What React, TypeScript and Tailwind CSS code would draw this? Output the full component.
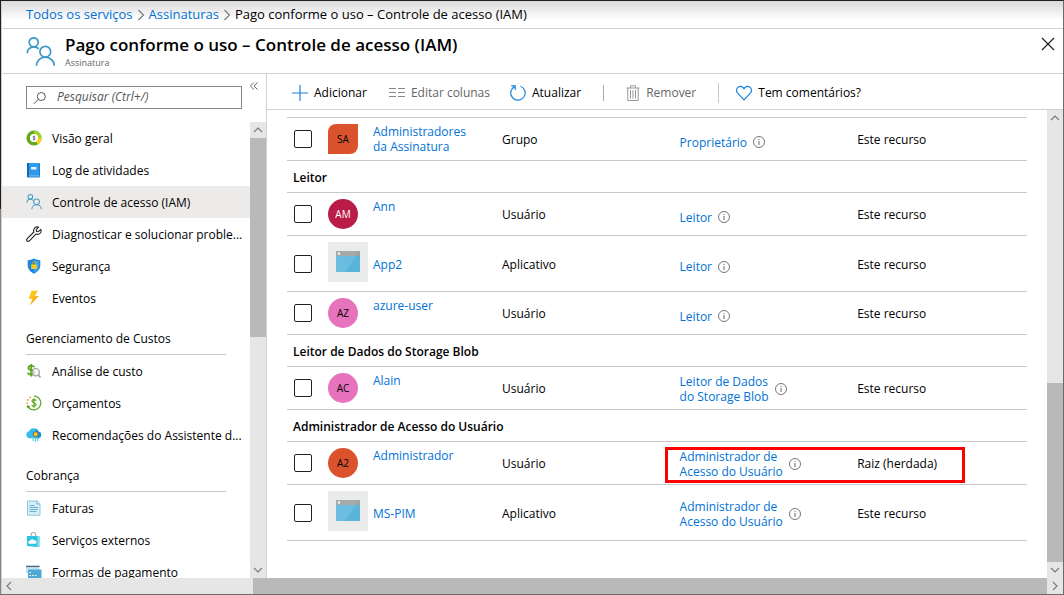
import type { ReactNode } from "react";

type IconProps = { className?: string };

function PeopleIcon({ className }: IconProps) {
  return (
    <svg viewBox="0 0 29 30" fill="none" stroke="#3999c6" strokeWidth="1.7" className={className} aria-hidden="true">
      <circle cx="7.7" cy="5.3" r="4.5" />
      <path d="M1.2 16.2c0-3.8 2.9-6.4 6.5-6.4 2.1 0 3.8.8 5 2.1" />
      <circle cx="19.3" cy="14.7" r="5.4" />
      <path d="M10.4 28.8c0-5 4-8.7 8.9-8.7s8.9 3.7 8.9 8.7" />
    </svg>
  );
}

function SmallPeopleIcon() {
  return (
    <svg viewBox="0 0 29 30" fill="none" stroke="#4a9dc4" strokeWidth="2" className="size-4" aria-hidden="true">
      <circle cx="7.7" cy="5.3" r="4.3" />
      <path d="M1.2 16.2c0-3.8 2.9-6.4 6.5-6.4 2.1 0 3.8.8 5 2.1" />
      <circle cx="19.3" cy="14.7" r="5.4" />
      <path d="M10.4 28.8c0-5 4-8.7 8.9-8.7s8.9 3.7 8.9 8.7" />
    </svg>
  );
}

function OverviewIcon() {
  return (
    <svg viewBox="0 0 16 16" className="size-4" aria-hidden="true">
      <g fill="none" strokeWidth="3.6">
        <circle cx="8" cy="8" r="5.8" stroke="#5fa91d" />
        <path d="M8 2.200A5.800 5.800 0 0 1 13.800 8" stroke="#a3cf2e" />
        <path d="M13.800 8A5.800 5.800 0 0 1 10.900 13.020" stroke="#fcd116" />
      </g>
      <circle cx="8" cy="8" r="4" fill="#fff" />
      <path d="M9.200 6.900C8.800 6.200 7 6.200 7 7.200s2.200.6 2.200 1.600S7.200 9.900 6.800 9.200M8 5.600v4.800" fill="none" stroke="#444" strokeWidth=".6" />
    </svg>
  );
}

function LogIcon() {
  return (
    <svg viewBox="0 0 16 16" className="size-4" aria-hidden="true">
      <rect x="1" y="1" width="13" height="14.500" rx="1" fill="#1b7fd0" />
      <rect x="3" y="1" width="10" height="13" fill="#2f9bea" />
      <rect x="1" y="1" width="2" height="14" fill="#1469b4" />
      <path d="M3 14h10.500" stroke="#7fc3f5" />
      <rect x="5" y="5" width="5.500" height="2.500" fill="#e8f4fd" />
    </svg>
  );
}

function WrenchIcon() {
  return (
    <svg viewBox="0 0 16 16" className="size-4" fill="none" stroke="#222" strokeWidth="1.1" strokeLinejoin="round" aria-hidden="true">
      <path d="M14.800 3.400 12.300 5.700 10.500 5.300 10.200 3.600 12.600 1.100C10.600.5 8.600 1.300 7.900 3.100 7.500 4.200 7.600 5.100 7.900 6L1.200 12.600C.5 13.300.5 14.200 1.100 14.900 1.700 15.500 2.700 15.500 3.400 14.800L9.900 8.100C11.500 8.700 13.300 8.300 14.400 7 15.200 6 15.300 4.600 14.800 3.400Z" />
    </svg>
  );
}

function ShieldIcon() {
  return (
    <svg viewBox="0 0 16 16" className="size-4" aria-hidden="true">
      <path d="M8 .6c2 1.400 4.200 1.600 6.300 1.700v5.400c0 4.200-4 6.800-6.300 7.900-2.300-1.100-6.300-3.700-6.300-7.900V2.300C3.800 2.200 6 2 8 .6Z" fill="#1a86dd" />
      <path d="M8 1.800c1.700 1 3.500 1.300 5.200 1.400v4.500c0 3.500-3.200 5.700-5.200 6.700Z" fill="#3ea2ef" />
      <path d="M6.200 7V5.500a1.800 1.800 0 0 1 3.600 0V7" fill="none" stroke="#d8a60a" strokeWidth="1" />
      <rect x="5.200" y="6.600" width="5.600" height="4.400" rx=".5" fill="#fbc91b" />
    </svg>
  );
}

function BoltIcon() {
  return (
    <svg viewBox="0 0 16 16" className="size-4" aria-hidden="true">
      <path d="M5.500.7h6.300L8.900 5.900h3.800L4.200 15.300 6.300 8.800H2.700Z" fill="#fcc419" />
      <path d="M8.900 5.900h3.800L4.200 15.300l3-7.300Z" fill="#f8a51b" opacity=".6" />
    </svg>
  );
}

function CostIcon() {
  return (
    <svg viewBox="0 0 16 16" className="size-4" fill="none" aria-hidden="true">
      <path d="M8.200 4.300C7.600 2.300 2.400 2.200 2.400 4.900c0 2.800 5.700 1.700 5.700 4.600 0 2.700-5.600 2.700-6.300.3M5.200 1v12.500" stroke="#5aa51d" strokeWidth="1.800" />
      <circle cx="9.700" cy="9.200" r="3.700" stroke="#999" strokeWidth="1.200" fill="#f3f7ef" fillOpacity=".7" />
      <path d="m12.300 12 2.200 2.500" stroke="#999" strokeWidth="1.500" />
    </svg>
  );
}

function BudgetIcon() {
  return (
    <svg viewBox="0 0 16 16" className="size-4" fill="none" aria-hidden="true">
      <path d="M8 1.200a6.800 6.800 0 1 1-5.700 10.600" stroke="#5aa51d" strokeWidth="1.200" />
      <path d="M1.200 9A6.800 6.800 0 0 1 6.500 1.400" stroke="#f08c1b" strokeWidth="1.400" strokeDasharray="1.600 1.700" />
      <path d="M.6 10.300 4.300 11 1.400 13.600Z" fill="#5aa51d" />
      <path d="M10 5.700C9.400 4.300 6 4.300 6 6.200s4.100 1.300 4.100 3.400-3.800 2.100-4.300.5M8 3.300v9.400" stroke="#5aa51d" strokeWidth="1.200" />
    </svg>
  );
}

function AdvisorIcon() {
  return (
    <svg viewBox="0 0 16 16" className="size-4" aria-hidden="true">
      <path d="M3.800 11.200A3.500 3.500 0 0 1 3 4.300 5.200 5.200 0 0 1 12.500 4.600a3.400 3.400 0 0 1 .3 6.600Z" fill="#32bdec" />
      <path d="M10 1.700a5 5 0 0 1 2.500 2.900 3.400 3.400 0 0 1 .3 6.600H10Z" fill="#1490d6" />
      <path d="M7.200 10v4M9.500 10v5M11.800 10v4" stroke="#54d3d6" strokeWidth="1.200" />
      <circle cx="9.700" cy="7.200" r="2.500" fill="#fcc419" stroke="#4b5e63" strokeWidth=".8" />
    </svg>
  );
}

function InvoiceIcon() {
  return (
    <svg viewBox="0 0 16 16" className="size-4" aria-hidden="true">
      <path d="M1.500 1h9.800L14 3.700v11.500H1.500Z" fill="#d9edf7" stroke="#8cc7e2" />
      <path d="M11 1v3h3" fill="#fff" stroke="#59b4d9" />
      <path d="M3.500 5.500h5M3.500 7.500h8.500M3.500 9.500h8.500M3.500 11.500h7" stroke="#59a9d0" strokeWidth=".9" />
    </svg>
  );
}

function ServicesIcon() {
  return (
    <svg viewBox="0 0 16 16" className="size-4" aria-hidden="true">
      <path d="M5.200 5V2.600a2.300 2.300 0 0 1 4.600 0V5" fill="none" stroke="#999" />
      <path d="M1 4h10.500l2.500.7v9.600l-2.500.7L1 14Z" fill="#2cc4e6" />
      <path d="m11.500 4 2.500.7v9.600l-2.500.7Z" fill="#8fdff0" />
      <path d="M3.700 11.800a1.500 1.500 0 0 1 .2-3 2.300 2.300 0 0 1 4.200-.4 1.700 1.700 0 0 1 1.200 3.400Z" fill="#fff" />
    </svg>
  );
}

function CardsIcon() {
  return (
    <svg viewBox="0 0 16 16" className="size-4" aria-hidden="true">
      <rect x="0" y="1" width="13.500" height="8" fill="#bfe3f2" />
      <path d="M0 2.500h13.500" stroke="#666" strokeWidth="1.200" />
      <rect x="2" y="5.500" width="13.500" height="9.500" rx=".8" fill="#4fa9d4" />
      <path d="M3.500 8.500H5M3.500 11.500H5M6.200 11.500h1.500M9 11.500h1.500" stroke="#fff" strokeWidth="1" />
    </svg>
  );
}

function InfoIcon() {
  return (
    <svg viewBox="0 0 12 12" className="size-3 shrink-0" fill="none" stroke="#666" aria-hidden="true">
      <circle cx="6" cy="6" r="5.500" strokeWidth=".9" />
      <path d="M6 5v4M6 3v1" strokeWidth="1" />
    </svg>
  );
}

function Chevron({ d }: { d: string }) {
  return (
    <svg viewBox="0 0 16 16" className="size-4 shrink-0" fill="none" stroke="#777" strokeWidth="1.100" aria-hidden="true">
      <path d={d} />
    </svg>
  );
}
const UP = "M4 10l4-4 4 4";
const DOWN = "M4 6l4 4 4-4";
const LEFT = "M9 4L5 8l4 4";
const RIGHT = "M6 4l4 4-4 4";
const CRUMB = "M5.500 3l5 5-5 5";

function AppTile() {
  return (
    <span className="flex size-10 items-center justify-center bg-[#eaebeb]">
      <svg viewBox="0 0 24 21" className="h-[21px] w-6" aria-hidden="true">
        <rect width="24" height="21" rx=".8" fill="#59b4d9" />
        <path d="M0 5h20L9 21H0Z" fill="#6cbcdf" />
        <path d="M0 5V.8Q0 0 .8 0h22.400q.8 0 .8.800V5Z" fill="#a0a1a2" />
        <path d="M0 5V.8Q0 0 .8 0H22l-3 5Z" fill="#b0b1b2" opacity=".5" />
        <rect x="2" y="1.500" width="2" height="2" fill="#fff" />
      </svg>
    </span>
  );
}

type NavItem = { label: string; icon: ReactNode; active?: boolean };
const sections: { title?: string; items: NavItem[] }[] = [
  {
    items: [
      { label: "Visão geral", icon: <OverviewIcon /> },
      { label: "Log de atividades", icon: <LogIcon /> },
      { label: "Controle de acesso (IAM)", icon: <SmallPeopleIcon />, active: true },
      { label: "Diagnosticar e solucionar proble...", icon: <WrenchIcon /> },
      { label: "Segurança", icon: <ShieldIcon /> },
      { label: "Eventos", icon: <BoltIcon /> },
    ],
  },
  {
    title: "Gerenciamento de Custos",
    items: [
      { label: "Análise de custo", icon: <CostIcon /> },
      { label: "Orçamentos", icon: <BudgetIcon /> },
      { label: "Recomendações do Assistente d...", icon: <AdvisorIcon /> },
    ],
  },
  {
    title: "Cobrança",
    items: [
      { label: "Faturas", icon: <InvoiceIcon /> },
      { label: "Serviços externos", icon: <ServicesIcon /> },
      { label: "Formas de pagamento", icon: <CardsIcon /> },
    ],
  },
];

type Member = {
  name: string[];
  initials?: string;
  color?: string;
  type: "Grupo" | "Usuário" | "Aplicativo";
  role: string[];
  scope: string;
  highlighted?: boolean;
};
const groups: { title?: string; members: Member[] }[] = [
  {
    members: [
      { name: ["Administradores", "da Assinatura"], initials: "SA", color: "bg-[#da532c] text-black", type: "Grupo", role: ["Proprietário"], scope: "Este recurso" },
    ],
  },
  {
    title: "Leitor",
    members: [
      { name: ["Ann"], initials: "AM", color: "bg-[#b91d47] text-white", type: "Usuário", role: ["Leitor"], scope: "Este recurso" },
      { name: ["App2"], type: "Aplicativo", role: ["Leitor"], scope: "Este recurso" },
      { name: ["azure-user"], initials: "AZ", color: "bg-[#e773bd] text-black", type: "Usuário", role: ["Leitor"], scope: "Este recurso" },
    ],
  },
  {
    title: "Leitor de Dados do Storage Blob",
    members: [
      { name: ["Alain"], initials: "AC", color: "bg-[#e773bd] text-black", type: "Usuário", role: ["Leitor de Dados", "do Storage Blob"], scope: "Este recurso" },
    ],
  },
  {
    title: "Administrador de Acesso do Usuário",
    members: [
      { name: ["Administrador"], initials: "A2", color: "bg-[#da532c] text-black", type: "Usuário", role: ["Administrador de", "Acesso do Usuário"], scope: "Raiz (herdada)", highlighted: true },
      { name: ["MS-PIM"], type: "Aplicativo", role: ["Administrador de", "Acesso do Usuário"], scope: "Este recurso" },
    ],
  },
];

function Lines({ lines }: { lines: string[] }) {
  return (
    <>
      {lines.map((line) => (
        <span key={line} className="block whitespace-nowrap">
          {line}
        </span>
      ))}
    </>
  );
}

function MemberRow({ member }: { member: Member }) {
  const isApp = member.type === "Aplicativo";
  const cell = `${isApp ? "h-14" : "h-[43px]"} border-b border-[#c8c8c8] px-0`;
  return (
    <tr>
      <td className={`${cell} py-0`}>
        <input
          type="checkbox"
          aria-label={`Selecionar ${member.name.join(" ")}`}
          className="ml-[7px] block size-[18px] appearance-none rounded-xs border border-[#222] bg-white"
        />
      </td>
      <td className={`${cell} pt-0 ${isApp ? "pb-1" : "pb-0"}`}>
        {isApp ? (
          <AppTile />
        ) : (
          <span
            className={`flex size-[30px] items-center justify-center text-[10px] ${member.color} ${
              member.type === "Grupo" ? "rounded-tl-lg rounded-br-lg" : "rounded-full"
            }`}
          >
            {member.initials}
          </span>
        )}
      </td>
      <td className={`${cell} pb-0 ${isApp ? "pt-0.5" : "pt-1.5 align-top"} leading-[15px]`}>
        <a href="#membro" className="block text-[#0072d6]">
          <Lines lines={member.name} />
        </a>
      </td>
      <td className={`${cell} pt-0.5 pb-0`}>{member.type}</td>
      <td className={`${cell} relative py-0`}>
        <div className={`flex items-center gap-1.5 leading-[15px] ${member.role.length > 1 ? "pt-0.5" : "pt-1.5"}`}>
          <a href="#funcao" className="text-[#0072d6]">
            <Lines lines={member.role} />
          </a>
          <InfoIcon />
        </div>
        {member.highlighted && (
          <span className="pointer-events-none absolute top-[5px] -left-[15px] h-9 w-[300px] border-3 border-[#ff0000]" />
        )}
      </td>
      <td className={`${cell} pt-0.5 pb-0`}>{member.scope}</td>
    </tr>
  );
}

const toolButton = "flex items-center gap-1.5";

export default function App() {
  return (
    <div className="flex h-screen flex-col overflow-hidden border-t border-r border-b border-t-[#221e20] border-r-[#6b6b6b] border-b-[#6b6b6b] bg-white font-['Open_Sans','Noto_Sans',sans-serif] text-[12px] text-black">
      <div className="flex min-h-0 flex-1">
        <div className="w-px bg-linear-to-b from-[#221e20] from-35% to-[#858585] to-35%" />
        <div className="flex min-w-0 flex-1 flex-col border-l border-[#d0d0d0]">
          <nav aria-label="Trilha" className="flex h-7 items-center border-b border-[#d0d0d0] bg-linear-to-b from-[#dcdadc] to-white to-70% pl-6 text-[13px]">
            <a href="#servicos" className="text-[#0072d6]">Todos os serviços</a>
            <Chevron d={CRUMB} />
            <a href="#assinaturas" className="text-[#0072d6]">Assinaturas</a>
            <Chevron d={CRUMB} />
            <span>Pago conforme o uso – Controle de acesso (IAM)</span>
          </nav>

          <header className="flex h-[45px] items-start border-b border-[#d0d0d0] pt-2 pr-2 pl-6">
            <PeopleIcon className="h-[30px] w-[29px]" />
            <div className="ml-2.5 flex-1">
              <h1 className="text-[17px] leading-4 font-semibold">Pago conforme o uso – Controle de acesso (IAM)</h1>
              <p className="mt-0.5 text-[9px] leading-4 text-[#666]">Assinatura</p>
            </div>
            <button type="button" aria-label="Fechar">
              <svg viewBox="0 0 14 14" className="size-3.5" stroke="#222" strokeWidth="1.200" aria-hidden="true">
                <path d="M1 1l12 12M13 1L1 13" />
              </svg>
            </button>
          </header>

          <div className="flex min-h-0 flex-1">
            <aside className="flex w-[265px] shrink-0 flex-col border-r border-[#d0d0d0]">
              <div className="flex h-12 shrink-0 items-start pt-2 pl-6">
                <label className="mt-1 flex h-[23px] w-[216px] items-center border border-[#888] pl-1.5">
                  <svg viewBox="0 0 14 14" className="size-3.5 shrink-0" fill="none" stroke="#555" strokeWidth="1" aria-hidden="true">
                    <circle cx="8.300" cy="5.500" r="4" />
                    <path d="M5.400 8.300 .8 12.900" />
                  </svg>
                  <input
                    type="text"
                    aria-label="Pesquisar"
                    placeholder="Pesquisar (Ctrl+/)"
                    className="ml-2.5 w-full min-w-0 bg-transparent pb-0.5 italic outline-none placeholder:text-[#555]"
                  />
                </label>
                <button type="button" aria-label="Recolher menu" className="ml-2">
                  <svg viewBox="0 0 9 9" className="size-2" fill="none" stroke="#555" aria-hidden="true">
                    <path d="M4.500.5l-4 4 4 4M8.500.5l-4 4 4 4" />
                  </svg>
                </button>
              </div>
              <div className="flex min-h-0 flex-1">
                <nav aria-label="Menu do recurso" className="min-w-0 flex-1 overflow-hidden">
                  {sections.map((section) => (
                    <section key={section.title ?? "geral"}>
                      {section.title && (
                        <h2 className="mr-6 ml-6 flex h-[41px] items-center border-b border-[#c8c8c8] pt-2.5 font-medium">
                          {section.title}
                        </h2>
                      )}
                      {section.items.map((item) => (
                        <a
                          key={item.label}
                          href="#menu"
                          className={`flex h-8 items-center gap-2.5 pl-6 whitespace-nowrap ${item.active ? "bg-[#edebe9]" : ""}`}
                        >
                          {item.icon}
                          <span className="pt-0.5">{item.label}</span>
                        </a>
                      ))}
                    </section>
                  ))}
                </nav>
                <div className="flex w-4 shrink-0 flex-col bg-[#e6e6e6]" aria-hidden="true">
                  <Chevron d={UP} />
                  <div className="min-h-0 flex-1">
                    <div className="h-[47%] bg-[#b9b9b9]" />
                  </div>
                  <Chevron d={DOWN} />
                </div>
              </div>
            </aside>

            <main className="flex min-w-0 flex-1 flex-col">
              <div className="flex h-9 shrink-0 items-center border-b border-[#d0d0d0] pt-0.5 pl-[25px] whitespace-nowrap">
                <button type="button" className={toolButton}>
                  <svg viewBox="0 0 16 16" className="size-4" stroke="#1b84dc" strokeWidth="1.200" aria-hidden="true">
                    <path d="M8 0v16M0 8h16" />
                  </svg>
                  Adicionar
                </button>
                <button type="button" className={`${toolButton} ml-[22px] text-[#666]`}>
                  <svg viewBox="0 0 16 16" className="size-4" stroke="#888" aria-hidden="true">
                    <path d="M0 3.500h7M9 3.500h7M0 7.500h7M9 7.500h7M0 11.500h7M9 11.500h7" />
                  </svg>
                  Editar colunas
                </button>
                <button type="button" className={`${toolButton} ml-5`}>
                  <svg viewBox="0 0 16 16" className="size-4" fill="none" stroke="#1b84dc" strokeWidth="1.200" aria-hidden="true">
                    <path d="M10.500 1.200a7.200 7.200 0 1 1-6 .4M1.200.8h4v4.100" />
                  </svg>
                  Atualizar
                </button>
                <span className="ml-[22px] h-4 w-px bg-[#aaa]" />
                <button type="button" className={`${toolButton} ml-[22px] text-[#666]`}>
                  <svg viewBox="0 0 14 16" className="h-4 w-3.5" fill="none" stroke="#999" aria-hidden="true">
                    <path d="M.5 3h13M4.500 3V.8h5V3M1.800 3v12.500h10.400V3M4.500 5v8.500M7 5v8.500M9.500 5v8.500" />
                  </svg>
                  Remover
                </button>
                <span className="ml-[22px] h-5 w-px bg-[#c8c8c8]" />
                <button type="button" className={`${toolButton} ml-[17px]`}>
                  <svg viewBox="0 0 16 16" className="size-4" fill="none" stroke="#1b84dc" strokeWidth="1.200" aria-hidden="true">
                    <path d="M8 14.800 1.600 8.200C-.2 6.300.3 3.200 2.400 2 4.500.8 7 1.600 8 3.800 9 1.600 11.500.8 13.600 2c2.100 1.200 2.600 4.300.8 6.200Z" />
                  </svg>
                  Tem comentários?
                </button>
              </div>
              <div className="flex min-h-0 flex-1">
                <div className="min-w-0 flex-1 overflow-hidden pt-[7px] pr-5 pl-5">
                  <table className="w-full table-fixed border-separate border-spacing-0 border-t border-[#c8c8c8] text-left">
                    <colgroup>
                      <col className="w-[41px]" />
                      <col className="w-[45px]" />
                      <col className="w-[129px]" />
                      <col className="w-[24%]" />
                      <col className="w-[24%]" />
                      <col />
                    </colgroup>
                    {groups.map((group) => (
                      <tbody key={group.title ?? "proprietario"}>
                        {group.title && (
                          <tr>
                            <th colSpan={6} scope="rowgroup" className="h-8 border-b border-[#c8c8c8] pt-0.5 pr-0 pb-0 pl-1.5 font-semibold">
                              {group.title}
                            </th>
                          </tr>
                        )}
                        {group.members.map((member) => (
                          <MemberRow key={member.name[0]} member={member} />
                        ))}
                      </tbody>
                    ))}
                  </table>
                </div>
                <div className="flex w-4 shrink-0 flex-col bg-[#e6e6e6]" aria-hidden="true">
                  <Chevron d={UP} />
                  <div className="flex min-h-0 flex-1 flex-col justify-end">
                    <div className="h-[41%] bg-[#b9b9b9]" />
                  </div>
                  <Chevron d={DOWN} />
                </div>
              </div>
            </main>
          </div>

          <div className="flex h-4 shrink-0 bg-[#e6e6e6]" aria-hidden="true">
            <Chevron d={LEFT} />
            <div className="ml-[235px] flex-1 bg-[#b9b9b9]" />
            <Chevron d={RIGHT} />
          </div>
        </div>
      </div>
    </div>
  );
}
